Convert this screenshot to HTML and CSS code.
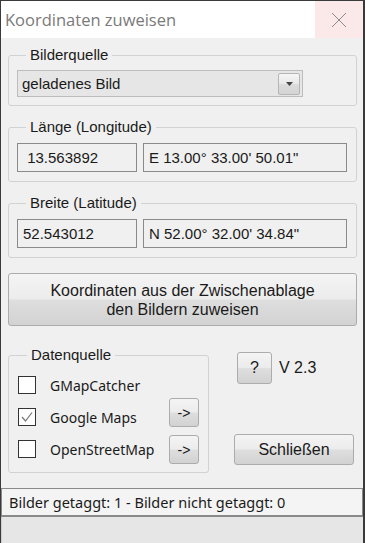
FILE: index.html
```html
<!DOCTYPE html>
<html lang="de">
<head>
    <meta charset="UTF-8">
    <meta name="viewport" content="width=device-width, initial-scale=1.0">
    <title>Koordinaten zuweisen</title>
    <link rel="stylesheet" href="styles.css">
</head>
<body>

<div class="window">
    <div class="titlebar">
        <div class="title">Koordinaten zuweisen</div>
        <div class="close-btn">
            <svg width="16" height="16" viewBox="0 0 16 16">
                <path d="M1 1 L15 15 M15 1 L1 15" stroke="#8a8a8a" stroke-width="1" fill="none"/>
            </svg>
        </div>
    </div>

    <div class="client">
        <fieldset class="group group-source">
            <legend>Bilderquelle</legend>
            <div class="combo">
                <span class="combo-text">geladenes Bild</span>
                <span class="combo-btn">
                    <svg width="7" height="4" viewBox="0 0 7 4"><path d="M0 0 L7 0 L3.5 4 Z" fill="#444"/></svg>
                </span>
            </div>
        </fieldset>

        <fieldset class="group group-coord">
            <legend>Länge (Longitude)</legend>
            <div class="coord-row">
                <div class="field field-dec">&nbsp;13.563892</div>
                <div class="field field-dms">E 13.00° 33.00' 50.01"</div>
            </div>
        </fieldset>

        <fieldset class="group group-coord group-lat">
            <legend>Breite (Latitude)</legend>
            <div class="coord-row">
                <div class="field field-dec">52.543012</div>
                <div class="field field-dms">N 52.00° 32.00' 34.84"</div>
            </div>
        </fieldset>

        <button class="btn btn-big">Koordinaten aus der Zwischenablage<br>den Bildern zuweisen</button>

        <div class="bottom-row">
            <fieldset class="group group-data">
                <legend>Datenquelle</legend>
                <div class="data-body">
                    <div class="check-list">
                        <label class="check-row">
                            <span class="checkbox"></span>
                            <span class="check-label">GMapCatcher</span>
                        </label>
                        <label class="check-row">
                            <span class="checkbox">
                                <svg width="16" height="16" viewBox="0 0 16 16"><path d="M3 8 L6.5 12 L13 3.5" stroke="#777" stroke-width="1.2" fill="none"/></svg>
                            </span>
                            <span class="check-label">Google Maps</span>
                        </label>
                        <label class="check-row">
                            <span class="checkbox"></span>
                            <span class="check-label">OpenStreetMap</span>
                        </label>
                    </div>
                    <div class="arrow-list">
                        <button class="btn btn-arrow">-&gt;</button>
                        <button class="btn btn-arrow">-&gt;</button>
                    </div>
                </div>
            </fieldset>

            <div class="side">
                <div class="help-row">
                    <button class="btn btn-help">?</button>
                    <span class="version">V 2.3</span>
                </div>
                <button class="btn btn-close">Schließen</button>
            </div>
        </div>

        <div class="statusbar">Bilder getaggt: 1 - Bilder nicht getaggt: 0</div>
        <div class="statusbar-empty"></div>
    </div>
</div>

</body>
</html>
```

FILE: styles.css
```css
body {
    margin: 0;
    font-family: "Liberation Sans", Arial, sans-serif;
    background: #f0f0f0;
}

.window {
    width: 365px;
    height: 543px;
    box-sizing: border-box;
    border-left: 1px solid #3a3a3a;
    border-right: 2px solid #3a3a3a;
    border-top: 1px solid #3a3a3a;
    display: flex;
    flex-direction: column;
    overflow: hidden;
}

.titlebar {
    height: 37px;
    background: #ffffff;
    display: flex;
    align-items: center;
    justify-content: space-between;
}

.title {
    font-family: "Open Sans", "Noto Sans", sans-serif;
    font-size: 16.5px;
    color: #7a7a7a;
    padding-left: 4px;
}

.close-btn {
    width: 48px;
    height: 37px;
    background: #fbe8e9;
    display: flex;
    align-items: center;
    justify-content: center;
}

.client {
    flex: 1;
    background: #f0f0f0;
    display: flex;
    flex-direction: column;
}

.group {
    margin: 0;
    border: 1px solid #d2d2d2;
    border-radius: 3px;
    font-size: 15px;
    color: #1a1a1a;
}

.group legend {
    padding: 0 4px;
    margin-left: 9px;
    line-height: 16px;
}

.group-source {
    margin: 9px 6px 0 7px;
    padding: 7px 8px 8px 8px;
}

.combo {
    width: 286px;
    height: 27px;
    box-sizing: border-box;
    border: 1px solid #bdbdbd;
    background: #e6e6e6;
    display: flex;
    align-items: center;
    justify-content: space-between;
    padding: 0 2px 0 4px;
}

.combo-btn {
    width: 22px;
    height: 22px;
    box-sizing: border-box;
    border: 1px solid #b5b5b5;
    border-radius: 2px;
    background: linear-gradient(#f6f6f6, #e8e8e8 50%, #dcdcdc 51%, #d4d4d4);
    display: flex;
    align-items: center;
    justify-content: center;
}

.group-coord {
    margin: 13px 6px 0 7px;
    padding: 8px 8px 9px 8px;
}

.group-lat {
    margin-top: 13px;
}

.coord-row {
    display: flex;
    gap: 6px;
}

.field {
    height: 29px;
    box-sizing: border-box;
    border: 1px solid #8a8a8a;
    background: #f0f0f0;
    display: flex;
    align-items: center;
    padding-left: 5px;
    white-space: pre;
}

.field-dec {
    width: 120px;
}

.field-dms {
    width: 204px;
}

.btn {
    font-family: "Liberation Sans", Arial, sans-serif;
    font-size: 16px;
    color: #1a1a1a;
    border: 1px solid #acacac;
    border-radius: 3px;
    background: linear-gradient(#f4f4f4, #ececec 48%, #dedede 52%, #d2d2d2);
    padding: 0;
    box-sizing: border-box;
}

.btn-big {
    margin: 15px 6px 0 7px;
    height: 53px;
    line-height: 19px;
}

.bottom-row {
    display: flex;
    margin-top: 21px;
}

.group-data {
    width: 201px;
    box-sizing: border-box;
    margin: 0 0 0 7px;
    padding: 6px 9px 7px 9px;
}

.data-body {
    display: flex;
    justify-content: space-between;
}

.check-list {
    display: flex;
    flex-direction: column;
}

.check-row {
    height: 32px;
    display: flex;
    align-items: center;
    gap: 14px;
}

.checkbox {
    width: 18px;
    height: 18px;
    box-sizing: border-box;
    border: 1px solid #333333;
    background: #ffffff;
    display: flex;
    align-items: center;
    justify-content: center;
}

.check-label {
    font-family: "Noto Sans", "Open Sans", sans-serif;
    font-size: 14px;
    color: #1a1a1a;
}

.arrow-list {
    display: flex;
    flex-direction: column;
    gap: 8px;
    padding-top: 29px;
}

.btn-arrow {
    width: 30px;
    height: 29px;
    font-size: 14px;
}

.side {
    flex: 1;
    display: flex;
    flex-direction: column;
    align-items: flex-start;
    padding: 5px 0 8px 0;
}

.help-row {
    display: flex;
    align-items: center;
    gap: 7px;
    margin-left: 28px;
}

.btn-help {
    width: 35px;
    height: 32px;
}

.version {
    font-size: 16px;
    color: #1a1a1a;
}

.btn-close {
    margin-top: auto;
    margin-left: 25px;
    width: 120px;
    height: 31px;
}

.statusbar {
    margin-top: 15px;
    height: 29px;
    box-sizing: border-box;
    border: 1px solid #8a8a8a;
    border-bottom-width: 2px;
    background: #f4f4f4;
    font-family: "Noto Sans", "Open Sans", sans-serif;
    font-size: 14.5px;
    color: #1a1a1a;
    display: flex;
    align-items: center;
    padding-left: 7px;
}

.statusbar-empty {
    flex: 1;
    background: #e6e6e6;
    border-left: 1px solid #cfcfcf;
}
```
